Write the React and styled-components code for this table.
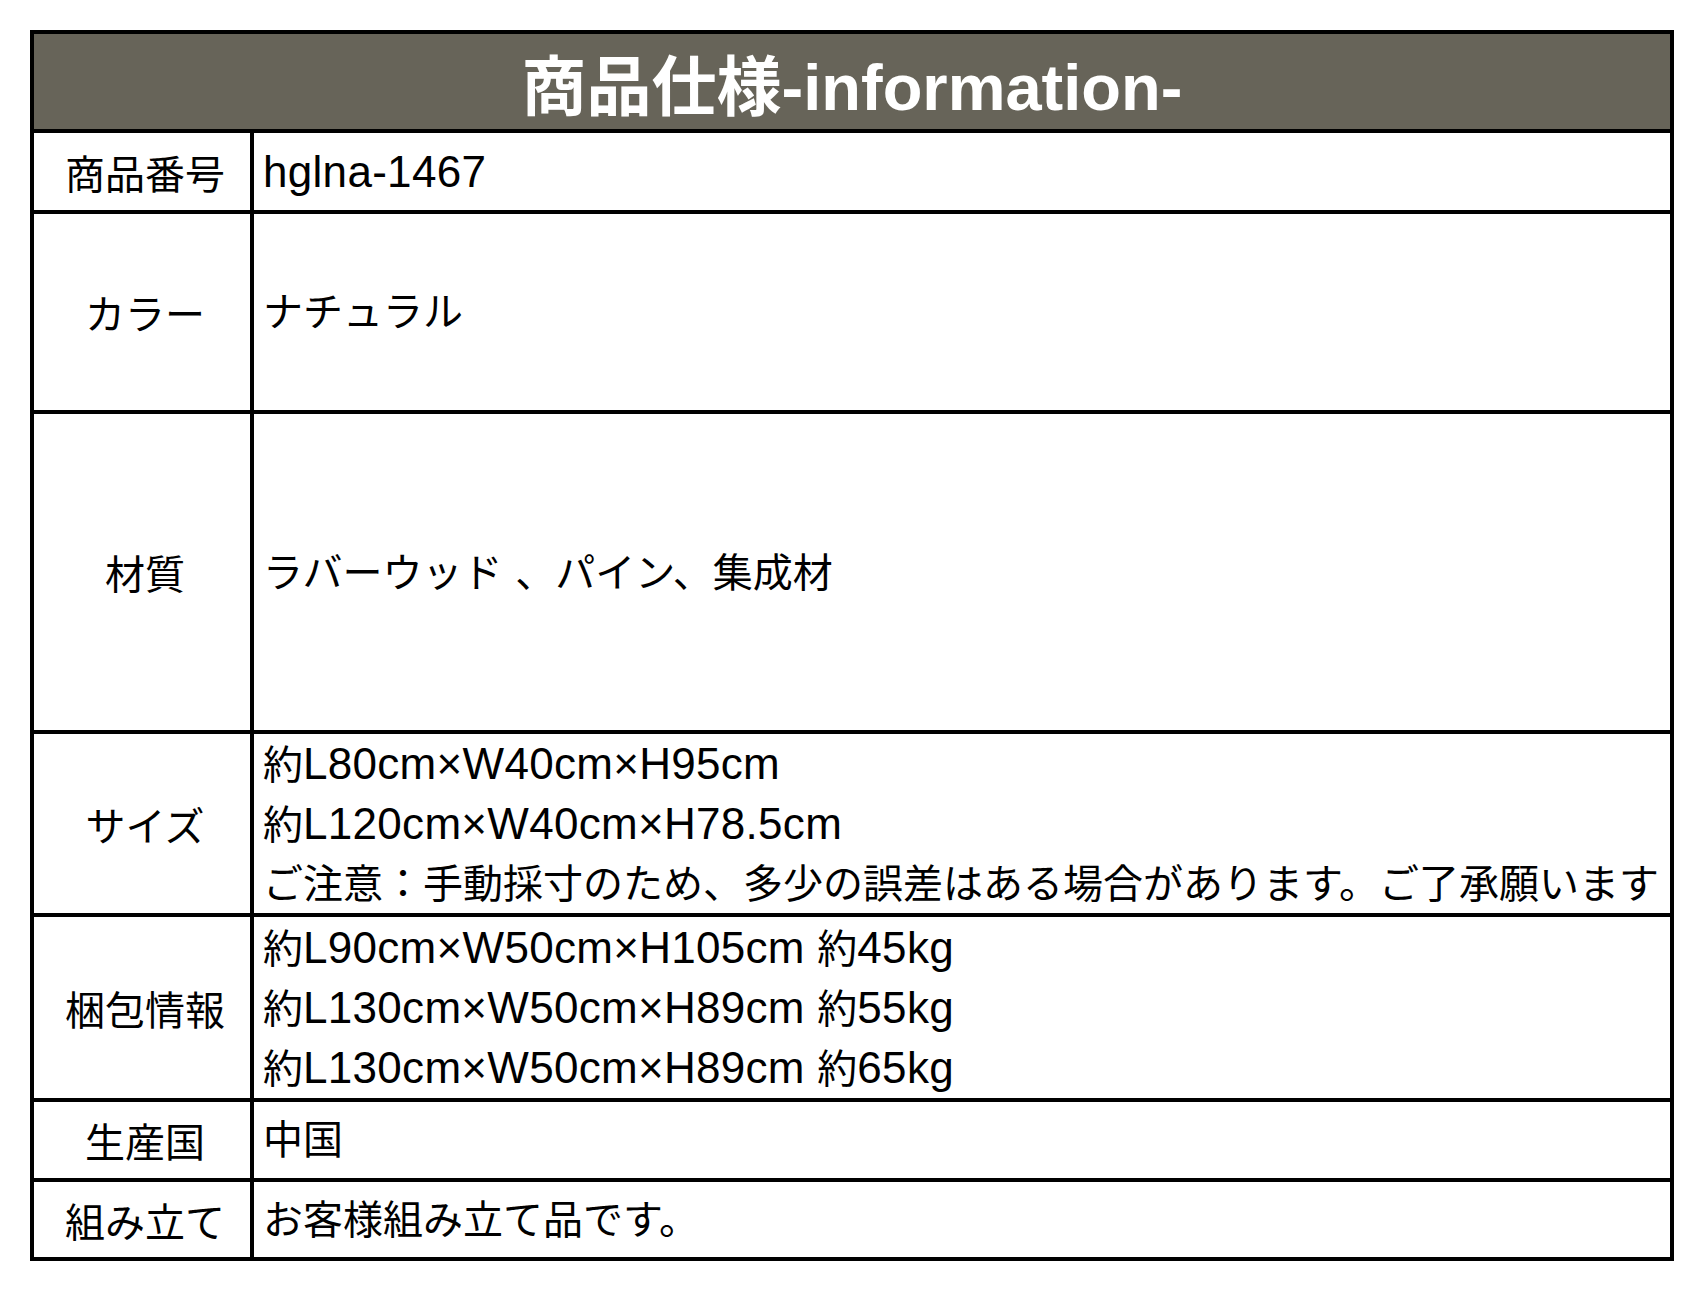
import React from 'react';
import styled, { createGlobalStyle } from 'styled-components';

const GlobalStyle = createGlobalStyle`
  html, body {
    margin: 0;
    padding: 0;
    background: #ffffff;
  }
  body {
    font-family: "Liberation Sans", "Noto Sans CJK JP", sans-serif;
    color: #000000;
  }
`;

const Page = styled.div`
  width: 1704px;
  min-height: 1292px;
  padding: 30px;
  box-sizing: border-box;
  background: #ffffff;
`;

const Table = styled.div`
  width: 1644px;
  box-sizing: border-box;
  display: grid;
  grid-template-columns: 216px 1fr;
  gap: 4px;
  padding: 4px;
  background: #000000;
`;

const Header = styled.div`
  grid-column: 1 / -1;
  height: 95px;
  background: #676459;
  color: #ffffff;
  display: flex;
  align-items: center;
  justify-content: center;
  font-family: "Liberation Sans", "Noto Sans CJK JP", sans-serif;
  font-weight: 700;
  font-size: 65px;
  white-space: nowrap;
`;

const Label = styled.div`
  height: ${(p) => p.$h}px;
  background: #ffffff;
  display: flex;
  align-items: center;
  justify-content: center;
  padding-left: 6px;
  font-family: "Noto Sans CJK JP", sans-serif;
  font-size: 40px;
  white-space: nowrap;
`;

const Value = styled.div`
  height: ${(p) => p.$h}px;
  background: #ffffff;
  display: flex;
  flex-direction: column;
  justify-content: center;
  padding-left: 9px;
  font-family: "Liberation Sans", "Noto Sans CJK JP", sans-serif;
  font-size: 40px;
  line-height: 60px;
  white-space: nowrap;
`;

const Line = styled.div`
  height: 60px;
`;

const Latin = styled.span`
  font-family: "Liberation Sans", sans-serif;
  font-size: 44px;
  letter-spacing: 0.3px;
`;

const LATIN_RE = /([A-Za-z0-9.×\- ]+)/;
const LATIN_TEST = /^[A-Za-z0-9.×\- ]+$/;

const Mixed = ({ text }) =>
  text.split(LATIN_RE).map((part, i) =>
    LATIN_TEST.test(part) ? <Latin key={i}>{part}</Latin> : <React.Fragment key={i}>{part}</React.Fragment>
  );

const rows = [
  { label: '商品番号', h: 77, lines: ['hglna-1467'] },
  { label: 'カラー', h: 196, lines: ['ナチュラル'] },
  { label: '材質', h: 316, lines: ['ラバーウッド 、パイン、集成材'] },
  {
    label: 'サイズ',
    h: 179,
    lines: [
      '約L80cm×W40cm×H95cm',
      '約L120cm×W40cm×H78.5cm',
      'ご注意：手動採寸のため、多少の誤差はある場合があります。ご了承願います',
    ],
  },
  {
    label: '梱包情報',
    h: 181,
    lines: [
      '約L90cm×W50cm×H105cm 約45kg',
      '約L130cm×W50cm×H89cm 約55kg',
      '約L130cm×W50cm×H89cm 約65kg',
    ],
  },
  { label: '生産国', h: 76, lines: ['中国'] },
  { label: '組み立て', h: 75, lines: ['お客様組み立て品です。'] },
];

export default function App() {
  return (
    <>
      <GlobalStyle />
      <Page>
        <Table>
          <Header>商品仕様-information-</Header>
          {rows.map((r) => (
            <React.Fragment key={r.label}>
              <Label $h={r.h}>{r.label}</Label>
              <Value $h={r.h}>
                {r.lines.map((l, i) => (
                  <Line key={i}>
                    <Mixed text={l} />
                  </Line>
                ))}
              </Value>
            </React.Fragment>
          ))}
        </Table>
      </Page>
    </>
  );
}
